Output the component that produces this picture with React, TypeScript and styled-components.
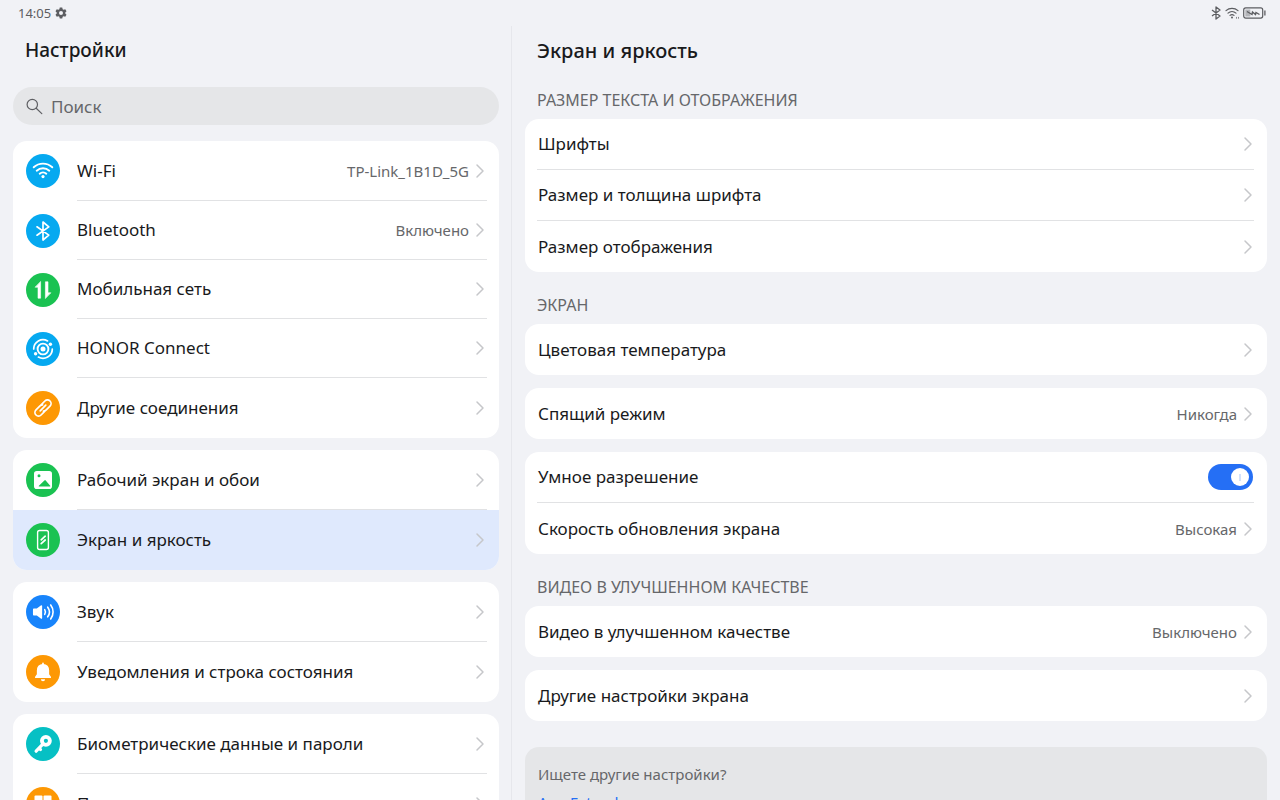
import React from "react";
import styled, { createGlobalStyle, css } from "styled-components";

const GlobalStyle = createGlobalStyle`
  *, *::before, *::after { box-sizing: border-box; }
  body {
    margin: 0;
    background: #f1f2f6;
    color: #191a1c;
    font-family: "Noto Sans", "Open Sans", sans-serif;
  }
  button, input { font: inherit; color: inherit; }
`;

const Screen = styled.div`
  display: flex;
  flex-direction: column;
  height: 100vh;
  overflow: hidden;
`;

const StatusBar = styled.header`
  display: flex;
  flex: none;
  align-items: center;
  justify-content: space-between;
  height: 26px;
  padding: 0 14px 0 18px;
  color: #5c5d61;
  font-size: 13px;
`;

const StatusGroup = styled.div<{ $gap: number }>`
  display: flex;
  align-items: center;
  gap: ${(p) => p.$gap}px;
`;

const Panes = styled.div`
  display: flex;
  flex: 1;
  min-height: 0;
`;

const paneScroll = css`
  overflow-y: auto;
  scrollbar-width: none;
`;

const Sidebar = styled.nav`
  ${paneScroll}
  width: 40%;
  padding: 8px 12px 12px 13px;
  border-right: 1px solid #e6e7ec;
`;

const Detail = styled.main`
  ${paneScroll}
  flex: 1;
  min-width: 0;
  padding: 9px 13px 24px;
`;

const SidebarTitle = styled.h1`
  margin: 0;
  padding: 0 12px;
  font-size: 19px;
  line-height: 32px;
  font-weight: 500;
`;

const DetailTitle = styled.h2`
  margin: 0;
  padding: 0 12px;
  font-size: 20px;
  line-height: 32px;
  font-weight: 500;
`;

const Search = styled.label`
  display: flex;
  align-items: center;
  gap: 8px;
  height: 38px;
  margin: 21px 0 16px;
  padding: 0 13px;
  border-radius: 19px;
  background: #e5e6e8;
  color: #5e5f63;
`;

const SearchInput = styled.input`
  flex: 1;
  min-width: 0;
  padding: 0;
  border: 0;
  outline: 0;
  background: none;
  font-size: 17px;
  &::placeholder { color: #66676a; opacity: 1; }
`;

const MenuCard = styled.ul`
  margin: 0 0 12px;
  padding: 0;
  border-radius: 14px;
  background: #fff;
  list-style: none;
  overflow: hidden;
`;

const MenuItem = styled.li`
  height: 59px;
  &:first-child, &:last-child { height: 60px; }
`;

const MenuLink = styled.a<{ $active?: boolean }>`
  display: flex;
  gap: 17px;
  height: 100%;
  padding: 0 12px 0 13px;
  align-items: center;
  background: ${(p) => (p.$active ? "#dfe9fd" : "none")};
  color: inherit;
  text-decoration: none;
`;

const Disc = styled.span<{ $color: string }>`
  display: flex;
  flex: none;
  align-items: center;
  justify-content: center;
  width: 34px;
  height: 34px;
  border-radius: 50%;
  background: ${(p) => p.$color};
  color: #fff;
`;

const MenuBody = styled.span`
  display: flex;
  flex: 1;
  align-items: center;
  gap: 6px;
  height: 100%;
  padding-right: 2px;
  border-bottom: 1px solid #e1e2e4;
  ${MenuItem}:last-child & { border-bottom: 0; }
`;

const Label = styled.span`
  flex: 1;
  font-size: 17px;
  line-height: 24px;
  white-space: nowrap;
`;

const Value = styled.span`
  color: #66676a;
  font-size: 15px;
  line-height: 20px;
  white-space: nowrap;
`;

const SectionLabel = styled.h3`
  margin: 0;
  padding: 24px 12px 10px;
  color: #66676a;
  font-size: 16px;
  line-height: 18px;
  font-weight: 400;
`;

const Cards = styled.div`
  display: flex;
  flex-direction: column;
  gap: 13px;
`;

const Card = styled.div`
  padding: 0 13px 0 12px;
  border-radius: 14px;
  background: #fff;
`;

const rowStyle = css`
  display: flex;
  align-items: center;
  gap: 6px;
  width: 100%;
  height: 51px;
  padding: 0 1px;
  border: 0;
  border-bottom: 1px solid #e1e2e4;
  background: none;
  text-align: left;
  &:last-child { border-bottom: 0; }
`;

const RowButton = styled.button`
  ${rowStyle}
`;

const RowToggle = styled.label`
  ${rowStyle}
`;

const Switch = styled.input`
  flex: none;
  appearance: none;
  display: flex;
  align-items: center;
  width: 45px;
  height: 26px;
  margin: 0;
  padding: 0 4px;
  border-radius: 13px;
  background: #c9cacd;
  &::before {
    content: "";
    width: 18px;
    height: 18px;
    border-radius: 50%;
    background: linear-gradient(#d3e1fb, #d3e1fb) center / 2px 7px no-repeat #fff;
  }
  &:checked {
    justify-content: flex-end;
    background: #256ff5;
  }
`;

const Hint = styled.aside`
  margin-top: 26px;
  padding: 15px 13px;
  border-radius: 14px;
  background: #e5e6e8;
  color: #66676a;
  font-size: 15px;
  line-height: 24px;
`;

const HintText = styled.p`
  margin: 0 0 4px;
`;

const HintLink = styled.a`
  color: #256ff5;
  text-decoration: none;
`;

const Chevron = () => (
  <svg width="10" height="16" viewBox="0 0 10 16" fill="none" stroke="#c6c7ca" strokeWidth="1.5" strokeLinecap="round" strokeLinejoin="round" aria-hidden="true">
    <path d="M2 2l6 6-6 6" />
  </svg>
);

const Glyph = ({ children }: { children: React.ReactNode }) => (
  <svg width="24" height="24" viewBox="0 0 24 24" fill="none" stroke="currentColor" strokeWidth="1.7" strokeLinecap="round" strokeLinejoin="round" aria-hidden="true">
    {children}
  </svg>
);

const icons = {
  wifi: (
    <Glyph>
      <path d="M2.7 8.3a13.6 13.6 0 0 1 18.6 0M5.7 11.7a9.2 9.2 0 0 1 12.6 0M8.7 14.7a4.9 4.9 0 0 1 6.6 0" strokeWidth="1.9" />
      <circle cx="12" cy="17.6" r="1.6" fill="currentColor" stroke="none" />
    </Glyph>
  ),
  bluetooth: (
    <Glyph>
      <path d="M6 7.8l11.8 8.3-5.8 4.9V3l5.800 4.900L6 16.200" />
    </Glyph>
  ),
  mobile: (
    <Glyph>
      <path d="M9.600 3.800v16.400H7V9.200H4.400z" fill="currentColor" stroke="currentColor" strokeWidth=".6" />
      <path d="M14.400 20.200V3.800H17v11h2.600z" fill="currentColor" stroke="currentColor" strokeWidth=".6" />
    </Glyph>
  ),
  connect: (
    <Glyph>
      <circle cx="12" cy="12" r="2.5" fill="currentColor" stroke="none" />
      <circle cx="12" cy="12" r="5.400" strokeWidth="1.900" />
      <path d="M2.700 12A9.300 9.300 0 0 1 16.600 3.900M21.300 12A9.300 9.300 0 0 1 7.400 20.100" strokeWidth="1.700" />
      <circle cx="19.400" cy="7.200" r="1.700" fill="currentColor" stroke="none" />
      <circle cx="4.600" cy="16.800" r="1.700" fill="currentColor" stroke="none" />
    </Glyph>
  ),
  link: (
    <Glyph>
      <path d="M9.200 14.800l5.600-5.600M8.600 10.300l5.300-5.300a3.600 3.600 0 0 1 5.100 5.100l-4 4a3.600 3.600 0 0 1-2.600 1M15.400 13.700L10.100 19A3.600 3.600 0 0 1 5 13.900l4-4a3.600 3.600 0 0 1 2.600-1" />
    </Glyph>
  ),
  picture: (
    <Glyph>
      <path fillRule="evenodd" fill="currentColor" stroke="none" d="M5.800 3h12.400A2.800 2.800 0 0 1 21 5.800v12.400A2.800 2.800 0 0 1 18.200 21H5.800A2.800 2.800 0 0 1 3 18.200V5.800A2.800 2.800 0 0 1 5.800 3zM8 6.300a1.500 1.500 0 1 0 0 3 1.500 1.500 0 0 0 0-3zM8.200 18.600h10.600c.5 0 .7-.5.4-.9l-4.500-5.300a.9.9 0 0 0-1.300 0l-5.500 5.400c-.3.300-.2.800.3.800z" />
    </Glyph>
  ),
  display: (
    <Glyph>
      <rect x="6.600" y="2.500" width="10.800" height="19" rx="2" strokeWidth="1.400" />
      <path d="M14.200 8.200l-4 3.600M14.200 12l-4 3.600" />
    </Glyph>
  ),
  sound: (
    <Glyph>
      <path d="M2.800 9.400h3.200l4.300-3.300v11.800L6 14.600H2.800z" fill="currentColor" />
      <path d="M13.700 9.600a4.400 4.400 0 0 1 0 4.800M16.700 7.200a8 8 0 0 1 0 9.600M19.700 5a11.500 11.500 0 0 1 0 14" strokeWidth="1.600" />
    </Glyph>
  ),
  bell: (
    <Glyph>
      <path d="M12 3.300v2M12 4.800c-3.600 0-5.300 2.400-5.300 5.500v4.200l-1.900 2.700h14.400l-1.900-2.700v-4.200c0-3.100-1.700-5.500-5.300-5.500z" fill="currentColor" />
      <path d="M9.900 19.200h4.200a2.100 2.100 0 0 1-4.200 0z" fill="currentColor" stroke="none" />
    </Glyph>
  ),
  key: (
    <Glyph>
      <circle cx="14.900" cy="8.800" r="4" strokeWidth="3.800" />
      <path d="M11.600 12.300l-6.500 6.900M8 16.400l1.500 1.200" strokeWidth="3.200" />
    </Glyph>
  ),
  apps: (
    <Glyph>
      <g fill="currentColor" stroke="none">
        <rect x="3.500" y="3.500" width="8" height="8" rx="1" />
        <rect x="12.500" y="3.500" width="8" height="8" rx="1" />
        <rect x="3.500" y="12.500" width="8" height="8" rx="1" />
        <rect x="12.500" y="12.500" width="8" height="8" rx="1" />
      </g>
    </Glyph>
  ),
};

type Entry = { icon: keyof typeof icons; color: string; label: string; value?: string; active?: boolean };

const BLUE = "#06a9f0";
const GREEN = "#1ac252";
const ORANGE = "#fd9804";

const menu: Entry[][] = [
  [
    { icon: "wifi", color: BLUE, label: "Wi-Fi", value: "TP-Link_1B1D_5G" },
    { icon: "bluetooth", color: BLUE, label: "Bluetooth", value: "Включено" },
    { icon: "mobile", color: GREEN, label: "Мобильная сеть" },
    { icon: "connect", color: BLUE, label: "HONOR Connect" },
    { icon: "link", color: ORANGE, label: "Другие соединения" },
  ],
  [
    { icon: "picture", color: GREEN, label: "Рабочий экран и обои" },
    { icon: "display", color: GREEN, label: "Экран и яркость", active: true },
  ],
  [
    { icon: "sound", color: "#1884fb", label: "Звук" },
    { icon: "bell", color: ORANGE, label: "Уведомления и строка состояния" },
  ],
  [
    { icon: "key", color: "#06c0c4", label: "Биометрические данные и пароли" },
    { icon: "apps", color: ORANGE, label: "Приложения" },
  ],
];

const Row = ({ label, value }: { label: string; value?: string }) => (
  <RowButton type="button">
    <Label>{label}</Label>
    {value && <Value>{value}</Value>}
    <Chevron />
  </RowButton>
);

export default function App() {
  return (
    <Screen>
      <GlobalStyle />
      <StatusBar>
        <StatusGroup $gap={4}>
          <span>14:05</span>
          <svg width="12" height="12" viewBox="0 0 24 24" aria-hidden="true">
            <path fill="currentColor" fillRule="evenodd" d="M9.500 1h5l.8 3.300 1.900 1.100 3.300-1 2.500 4.300L20.600 11v2l2.400 2.300-2.500 4.300-3.300-1-1.900 1.100-.8 3.300h-5l-.8-3.300-1.900-1.100-3.300 1L1 15.300 3.400 13v-2L1 8.700l2.500-4.300 3.300 1 1.900-1.100zM12 8a4 4 0 1 0 0 8 4 4 0 0 0 0-8z" />
          </svg>
        </StatusGroup>
        <StatusGroup $gap={3}>
          <svg width="12" height="14" viewBox="0 0 12 14" fill="none" stroke="currentColor" strokeWidth="1.300" strokeLinejoin="round" aria-hidden="true">
            <path d="M2 4l8 6-4 3V1l4 3-8 6" />
          </svg>
          <svg width="15" height="14" viewBox="0 0 15 14" fill="none" stroke="currentColor" strokeWidth="1.200" strokeLinecap="round" aria-hidden="true">
            <path d="M1 4.600a9 9 0 0 1 12 0M3 7.100a6 6 0 0 1 8 0M5 9.400a3 3 0 0 1 4 0" />
            <circle cx="7" cy="11.600" r="1" fill="currentColor" stroke="none" />
            <path d="M11.500 11.300v1M13.500 11.300v1" strokeWidth=".7" />
          </svg>
          <svg width="23" height="12" viewBox="0 0 23 12" fill="none" stroke="currentColor" aria-hidden="true">
            <rect x=".7" y=".9" width="19" height="10.200" rx="2" strokeWidth="1.200" />
            <rect x="2.300" y="2.500" width="5" height="7" fill="#b4b5b9" stroke="none" />
            <path d="M4 4.500l5 3 .5-2.500 3 2.500.5-2 3.500 2" strokeWidth="1.400" />
            <path d="M21.900 3.500v5" strokeWidth="1.300" />
          </svg>
        </StatusGroup>
      </StatusBar>
      <Panes>
        <Sidebar aria-label="Настройки">
          <SidebarTitle>Настройки</SidebarTitle>
          <Search>
            <svg width="17" height="17" viewBox="0 0 17 17" fill="none" stroke="currentColor" strokeWidth="1.200" strokeLinecap="round" aria-hidden="true">
              <circle cx="6.300" cy="6.500" r="5.200" />
              <path d="M10.200 10.300l5.600 5.300" />
            </svg>
            <SearchInput type="text" placeholder="Поиск" aria-label="Поиск" />
          </Search>
          {menu.map((group) => (
            <MenuCard key={group[0].label}>
              {group.map((item) => (
                <MenuItem key={item.label}>
                  <MenuLink href="#" $active={item.active} aria-current={item.active ? "page" : undefined}>
                    <Disc $color={item.color}>{icons[item.icon]}</Disc>
                    <MenuBody>
                      <Label>{item.label}</Label>
                      {item.value && <Value>{item.value}</Value>}
                      <Chevron />
                    </MenuBody>
                  </MenuLink>
                </MenuItem>
              ))}
            </MenuCard>
          ))}
        </Sidebar>
        <Detail>
          <DetailTitle>Экран и яркость</DetailTitle>
          <SectionLabel>РАЗМЕР ТЕКСТА И ОТОБРАЖЕНИЯ</SectionLabel>
          <Card>
            <Row label="Шрифты" />
            <Row label="Размер и толщина шрифта" />
            <Row label="Размер отображения" />
          </Card>
          <SectionLabel>ЭКРАН</SectionLabel>
          <Cards>
            <Card>
              <Row label="Цветовая температура" />
            </Card>
            <Card>
              <Row label="Спящий режим" value="Никогда" />
            </Card>
            <Card>
              <RowToggle>
                <Label>Умное разрешение</Label>
                <Switch type="checkbox" role="switch" defaultChecked />
              </RowToggle>
              <Row label="Скорость обновления экрана" value="Высокая" />
            </Card>
          </Cards>
          <SectionLabel>ВИДЕО В УЛУЧШЕННОМ КАЧЕСТВЕ</SectionLabel>
          <Cards>
            <Card>
              <Row label="Видео в улучшенном качестве" value="Выключено" />
            </Card>
            <Card>
              <Row label="Другие настройки экрана" />
            </Card>
          </Cards>
          <Hint>
            <HintText>Ищете другие настройки?</HintText>
            <HintLink href="#">App Extender</HintLink>
          </Hint>
        </Detail>
      </Panes>
    </Screen>
  );
}
